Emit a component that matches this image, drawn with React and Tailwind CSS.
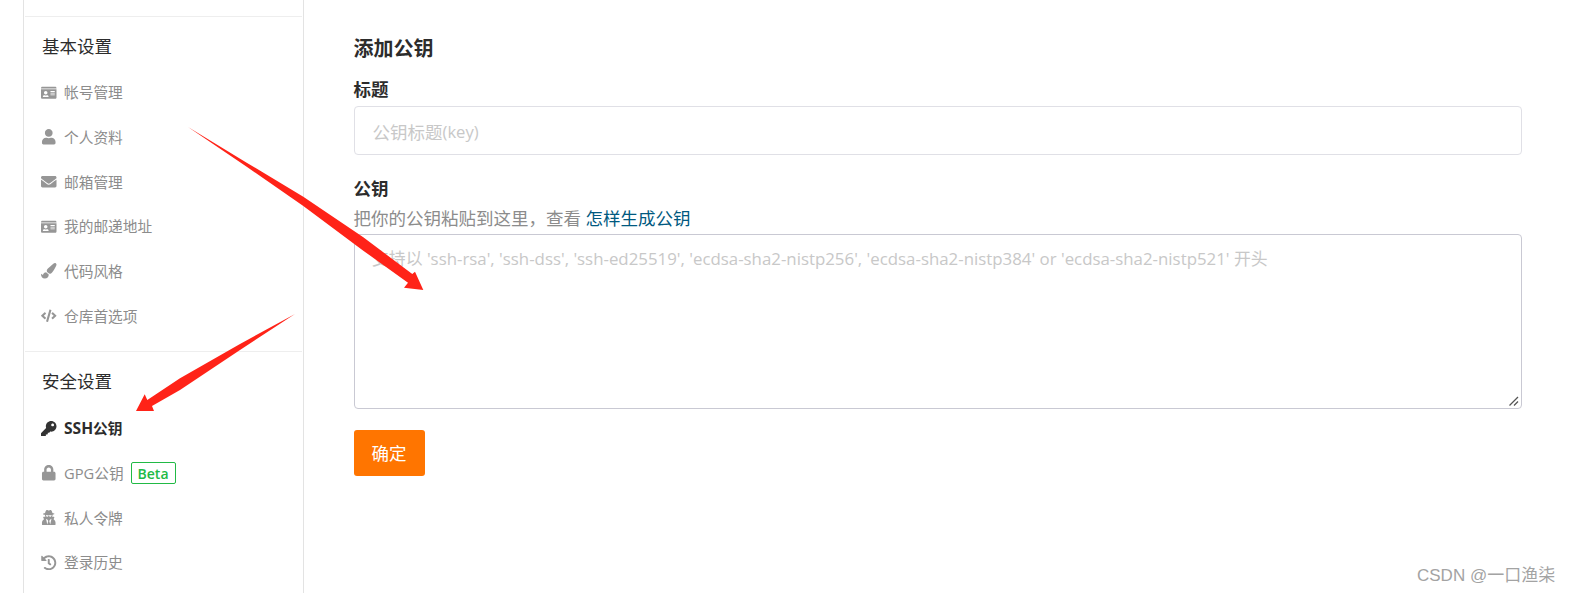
import React from "react";
import { FaIdCard, FaUser, FaEnvelope, FaPaintBrush, FaCode, FaKey, FaLock, FaUserSecret, FaHistory } from "react-icons/fa";

function Item({ icon: Icon, label, active, children }) {
  return (
    <div className={`flex items-center h-[44.7px] pl-[16px] text-[14.7px] ${active ? "font-bold text-[#2c2c2c]" : "text-[#8c8c8c]"}`}>
      <span className={`w-[23px] flex items-center ${active ? "text-[#333]" : "text-[#969696]"}`}>
        <span className="w-[16px] flex justify-center">
          <Icon className="w-[15.5px] h-[15.5px]" />
        </span>
      </span>
      <span>{label}</span>
      {children}
    </div>
  );
}

function Section({ title, children, className }) {
  return (
    <div className={`border-t border-[#eeeeee] mx-[1px] ${className}`}>
      <div className="h-[58px] flex items-center pl-[17px] text-[17.5px] text-[#2c2c2c]">{title}</div>
      {children}
    </div>
  );
}

export default function App() {
  return (
    <div className="relative w-[1570px] h-[593px] overflow-hidden bg-white flex font-['Open_Sans','Noto_Sans_CJK_SC',sans-serif]">
      <aside className="ml-[23px] w-[281px] h-full border-x border-[#e3e3e3] pt-[16px] shrink-0">
        <Section title="基本设置" className="h-[335px]">
          <div className="-mt-[5px]">
            <Item icon={FaIdCard} label="帐号管理" />
            <Item icon={FaUser} label="个人资料" />
            <Item icon={FaEnvelope} label="邮箱管理" />
            <Item icon={FaIdCard} label="我的邮递地址" />
            <Item icon={FaPaintBrush} label="代码风格" />
            <Item icon={FaCode} label="仓库首选项" />
          </div>
        </Section>
        <Section title="安全设置">
          <div className="-mt-[4px]">
            <Item icon={FaKey} label={<><span className="text-[15.6px]">SSH</span>公钥</>} active />
            <Item icon={FaLock} label="GPG公钥">
              <span className="ml-[7px] h-[22px] px-[6px] flex items-center border border-[#21ba45] rounded-[2px] text-[#21ba45] text-[14px] font-semibold">Beta</span>
            </Item>
            <Item icon={FaUserSecret} label="私人令牌" />
            <Item icon={FaHistory} label="登录历史" />
          </div>
        </Section>
      </aside>

      <main className="flex-1 pl-[49.5px] pr-[48px] pt-[34px]">
        <h2 className="h-[30px] flex items-center text-[20px] font-bold text-[#2c2c2c]">添加公钥</h2>
        <label className="mt-[10px] h-[30px] flex items-center text-[17.5px] font-bold text-[#2c2c2c]">标题</label>
        <div className="mt-[2px] h-[49px] border border-[#e0e0e6] rounded-[4px] flex items-center pl-[18px] pt-[3px] text-[17.5px] text-[#c8c8c8]">
          公钥标题<span className="text-[16.6px]">(key)</span>
        </div>
        <label className="mt-[18px] h-[30px] flex items-center text-[17.5px] font-bold text-[#2c2c2c]">公钥</label>
        <div className="h-[30px] flex items-center text-[17.5px] text-[#8c8c8c]">
          把你的公钥粘贴到这里，查看&nbsp;<a className="text-[#005980]">怎样生成公钥</a>
        </div>
        <div className="relative mt-[1px] h-[175px] border border-[#c9c9d3] rounded-[4px] pl-[17.5px] pt-[11px] text-[16.85px] leading-[26px] text-[#c8c8c8]">
          支持以 'ssh-rsa', 'ssh-dss', 'ssh-ed25519', 'ecdsa-sha2-nistp256', 'ecdsa-sha2-nistp384' or 'ecdsa-sha2-nistp521' 开头
          <svg className="absolute right-[1px] bottom-[1px]" width="12" height="12" viewBox="0 0 12 12">
            <path d="M1.5 10.5 L10 2 M6 10.5 L10 6.5" stroke="#555" strokeWidth="1.3" fill="none" />
          </svg>
        </div>
        <button className="mt-[21px] w-[71px] h-[46px] bg-[#ff7500] rounded-[3px] text-white text-[17.5px]">确定</button>
      </main>

      <svg className="absolute inset-0 pointer-events-none" width="1570" height="593" viewBox="0 0 1570 593">
        <polygon points="188,127 246.7,162.7 303.3,196.7 363.3,237.3 412.3,274 415,271.7 423.3,290 404,287.7 408,282.7 363.3,250.7 303.3,206 246.7,166.7" fill="#ff2318" />
        <polygon points="295,314 240,344 180,378.3 147.3,400 144.7,394.3 136,411 154,411 152,406 180,390 240,350" fill="#ff2318" />
      </svg>

      <div className="absolute left-[1417px] top-[564px] text-[17px] leading-[24px] text-[#a3a3a3] font-['Liberation_Sans','Noto_Sans_CJK_SC',sans-serif]">CSDN @一口渔柒</div>
    </div>
  );
}
